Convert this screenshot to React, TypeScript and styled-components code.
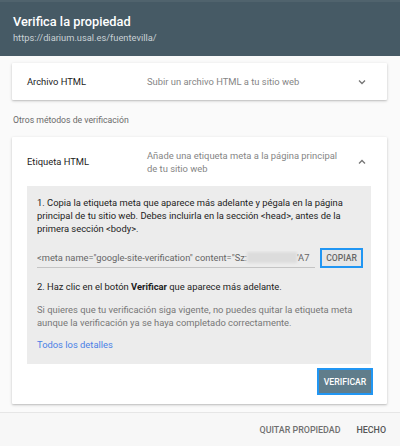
import React from "react";
import styled, { createGlobalStyle } from "styled-components";

const GlobalStyle = createGlobalStyle`
  html, body {
    margin: 0;
    padding: 0;
    background: #fafafa;
    font-family: Roboto, "Liberation Sans", Arial, sans-serif;
    -webkit-font-smoothing: antialiased;
  }
`;

const Page = styled.div`
  width: 400px;
  height: 446px;
  display: flex;
  flex-direction: column;
  overflow: hidden;
  background: #fafafa;
`;

const Header = styled.div`
  flex-shrink: 0;
  height: 56px;
  background: #465a65;
  border-top: 2px solid #50636d;
  box-sizing: border-box;
  padding: 12px 12px 0 13px;
  display: flex;
  flex-direction: column;
`;

const Title = styled.div`
  color: #ffffff;
  font-size: 12.8px;
  font-weight: 500;
  line-height: 16px;
`;

const Url = styled.div`
  color: #c9d1d5;
  font-size: 9.3px;
  line-height: 12px;
  margin-top: 2px;
`;

const Body = styled.div`
  flex: 1;
  padding: 7px 13px 0 12px;
  display: flex;
  flex-direction: column;
`;

const Card = styled.div`
  background: #ffffff;
  box-shadow: 0 1px 3px rgba(0, 0, 0, 0.22), 0 1px 1px rgba(0, 0, 0, 0.06);
  border-radius: 1px;
`;

const CardHead = styled.div<{ $tall?: boolean }>`
  display: flex;
  align-items: center;
  height: ${({ $tall }) => ($tall ? "49px" : "37px")};
  padding: 0 20px 0 15px;
`;

const MethodName = styled.div`
  width: 120px;
  font-size: 9.4px;
  color: #1c1c1c;
`;

const MethodDesc = styled.div`
  flex: 1;
  font-size: 9.4px;
  line-height: 13px;
  color: #858585;
  padding-right: 15px;
`;

const Chevron = styled.svg`
  width: 10px;
  height: 10px;
  flex-shrink: 0;
`;

const SectionLabel = styled.div`
  font-size: 8.7px;
  color: #6a6a6a;
  height: 37px;
  box-sizing: border-box;
  padding: 3px 0 0 1px;
  display: flex;
  align-items: center;
`;

const Panel = styled.div`
  margin: 0 16px 0 15px;
  background: #ececec;
  padding: 10px 8px 13px 10px;
  font-size: 9.4px;
  line-height: 13px;
  color: #1c1c1c;
`;

const MetaRow = styled.div`
  display: flex;
  align-items: flex-end;
  margin-top: 13px;
`;

const MetaField = styled.div`
  width: 278px;
  border-bottom: 1px solid #c4c4c4;
  color: #666666;
  font-size: 9.3px;
  line-height: 13px;
  padding-bottom: 3px;
  white-space: nowrap;
  overflow: hidden;
`;

const Blur = styled.span`
  display: inline-block;
  width: 50px;
  height: 11px;
  vertical-align: -2px;
  background: #dcdcdc;
  filter: blur(1px);
`;

const CopyButton = styled.button`
  margin-left: 5px;
  height: 20px;
  width: 43px;
  box-sizing: border-box;
  border: 2px solid #2196f3;
  background: #e6e6e6;
  color: #666666;
  font-family: inherit;
  font-size: 8.6px;
  font-weight: 500;
  padding: 0;
`;

const Step = styled.p<{ $muted?: boolean }>`
  margin: ${({ $muted }) => ($muted ? "10px 0 0" : "12px 0 0")};
  color: ${({ $muted }) => ($muted ? "#777777" : "#1c1c1c")};
`;

const Link = styled.a`
  display: block;
  margin-top: 9px;
  color: #4a7fe6;
  font-size: 9.4px;
  text-decoration: none;
`;

const Actions = styled.div`
  display: flex;
  justify-content: flex-end;
  padding: 4px 14px 9px;
`;

const VerifyButton = styled.button`
  height: 27px;
  width: 56px;
  box-sizing: border-box;
  border: 2px solid #2196f3;
  background: #607d8b;
  color: #ffffff;
  font-family: inherit;
  font-size: 8.7px;
  font-weight: 500;
  padding: 0;
`;

const Footer = styled.div`
  flex-shrink: 0;
  height: 33px;
  border-top: 1px solid #e6e6e6;
  background: #f7f7f7;
  display: flex;
  align-items: center;
  justify-content: flex-end;
  gap: 16px;
  padding: 0 14px 0 0;
`;

const FooterButton = styled.span<{ $strong?: boolean }>`
  font-size: 8.9px;
  font-weight: 500;
  color: ${({ $strong }) => ($strong ? "#555" : "#6f6f6f")};
`;

function ChevronIcon({ up }: { up?: boolean }) {
  return (
    <Chevron viewBox="0 0 10 10">
      <path
        d={up ? "M2 6.5 L5 3.5 L8 6.5" : "M2 3.5 L5 6.5 L8 3.5"}
        fill="none"
        stroke="#757575"
        strokeWidth="1.3"
      />
    </Chevron>
  );
}

export default function App() {
  return (
    <Page>
      <GlobalStyle />
      <Header>
        <Title>Verifica la propiedad</Title>
        <Url>https://diarium.usal.es/fuentevilla/</Url>
      </Header>
      <Body>
        <Card>
          <CardHead>
            <MethodName>Archivo HTML</MethodName>
            <MethodDesc>Subir un archivo HTML a tu sitio web</MethodDesc>
            <ChevronIcon />
          </CardHead>
        </Card>

        <SectionLabel>Otros métodos de verificación</SectionLabel>

        <Card>
          <CardHead $tall>
            <MethodName>Etiqueta HTML</MethodName>
            <MethodDesc>
              Añade una etiqueta meta a la página principal de tu sitio web
            </MethodDesc>
            <ChevronIcon up />
          </CardHead>
          <Panel>
            <div>
              1. Copia la etiqueta meta que aparece más adelante y pégala en la
              página principal de tu sitio web. Debes incluirla en la sección
              &lt;head&gt;, antes de la primera sección &lt;body&gt;.
            </div>
            <MetaRow>
              <MetaField>
                &lt;meta name="google-site-verification" content="Sz:
                <Blur />
                'A7
              </MetaField>
              <CopyButton>COPIAR</CopyButton>
            </MetaRow>
            <Step>
              2. Haz clic en el botón <b>Verificar</b> que aparece más adelante.
            </Step>
            <Step $muted>
              Si quieres que tu verificación siga vigente, no puedes quitar la
              etiqueta meta aunque la verificación ya se haya completado
              correctamente.
            </Step>
            <Link href="#">Todos los detalles</Link>
          </Panel>
          <Actions>
            <VerifyButton>VERIFICAR</VerifyButton>
          </Actions>
        </Card>
      </Body>
      <Footer>
        <FooterButton>QUITAR PROPIEDAD</FooterButton>
        <FooterButton $strong>HECHO</FooterButton>
      </Footer>
    </Page>
  );
}
